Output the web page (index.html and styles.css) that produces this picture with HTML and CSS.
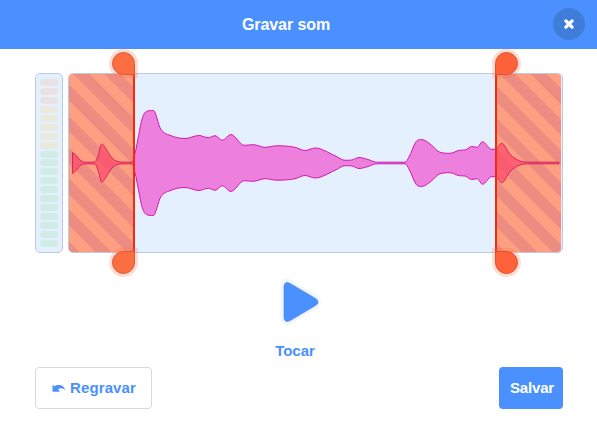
FILE: index.html
```html
<!DOCTYPE html>
<html lang="pt">
<head>
<meta charset="utf-8">
<title>Gravar som</title>
<link rel="stylesheet" href="styles.css">
</head>
<body>
<header class="header">
  <h1 class="title">Gravar som</h1>
  <button class="close" aria-label="Fechar">
    <svg width="12" height="12" viewBox="0 0 12 12"><path d="M2.9 2.9 9.1 9.1M9.1 2.9 2.9 9.1"/></svg>
  </button>
</header>
<main class="body">
  <div class="visualization">
    <div class="meter">
      <i class="red"></i><i class="red"></i><i class="red"></i>
      <i class="yellow"></i><i class="yellow"></i><i class="yellow"></i><i class="yellow"></i><i class="yellow"></i>
      <i></i><i></i><i></i><i></i><i></i><i></i><i></i><i></i><i></i><i></i><i></i>
    </div>
    <div class="waveform">
      <div class="trim trim-start"></div>
      <div class="trim trim-end"></div>
      <svg class="wave" width="493" height="178" viewBox="69 74 493 178">
        <defs>
          <clipPath id="kept"><rect x="134" y="74" width="362" height="178"/></clipPath>
          <clipPath id="cut"><path d="M69 74H134V252H69ZM496 74H562V252H496Z"/></clipPath>
        </defs>
        <path class="wave-kept" clip-path="url(#kept)"/>
        <path class="wave-cut" clip-path="url(#cut)"/>
      </svg>
      <div class="line line-start"><b class="handle top"></b><b class="handle bottom"></b></div>
      <div class="line line-end"><b class="handle top"></b><b class="handle bottom"></b></div>
    </div>
  </div>
  <button class="play">
    <svg width="46" height="50" viewBox="0 0 46 50">
      <path class="play-halo" d="M9 9.5V40.5Q9 46.5 14.5 43.8L40 29Q45 25 40 21L14.5 6.2Q9 3.5 9 9.5Z"/>
      <path class="play-icon" d="M9 9.5V40.5Q9.6 46.2 14.7 43.8L40.5 28.6Q45.6 25 40.5 21.4L14.7 6.2Q9.6 3.8 9 9.5Z"/>
    </svg>
    <span>Tocar</span>
  </button>
  <div class="actions">
    <button class="rerecord">
      <svg width="14" height="10" viewBox="0 0 14 10"><path d="M.5 1.7 2.3 3.2C6 .9 11.8 1.2 13.5 7.7 11.5 5.1 8.5 4.6 6.1 6.2L7.5 8Q7.8 8.8 7 8.800H1.2Q.5 8.8.5 8Z"/></svg>
      <span>Regravar</span>
    </button>
    <button class="save">Salvar</button>
  </div>
</main>
<script src="wave.js"></script>
</body>
</html>
```
FILE: styles.css
```css
* { box-sizing: border-box; }
body {
  margin: 0;
  height: 432px;
  overflow: hidden;
  background: #fff;
  font-family: "Liberation Sans", Arial, sans-serif;
  font-weight: bold;
}
button {
  font: inherit;
  border: 0;
  padding: 0;
  background: none;
}
.header {
  display: flex;
  align-items: center;
  height: 49px;
  padding: 0 12px 0 19px;
  background: #4a90ff;
  color: #fff;
}
.title {
  flex: 1;
  margin: 0;
  text-align: center;
  font-size: 16px;
  line-height: 20px;
  letter-spacing: -.08px;
}
.close {
  display: flex;
  align-items: center;
  justify-content: center;
  width: 32px;
  height: 32px;
  margin-bottom: 1px;
  border-radius: 50%;
  background: #407cda;
}
.close path {
  stroke: #fff;
  stroke-width: 3.3;
  stroke-linecap: round;
}
.body { padding: 24px 34px 0 35px; }
.visualization {
  display: flex;
  gap: 5px;
  height: 180px;
}
.meter {
  display: flex;
  flex-direction: column;
  gap: 1.94px;
  width: 28px;
  padding: 5px 4px;
  border: 1px solid #bccae0;
  border-radius: 5px;
  background: #e5f0ff;
}
.meter i {
  flex: 0 0 7px;
  border-radius: 3px;
  background: #d1ebe7;
}
.meter .red { background: #e9e2e3; }
.meter .yellow { background: #e9eadd; }
.waveform {
  position: relative;
  display: flex;
  justify-content: space-between;
  width: 495px;
  border: 1px solid #bccae0;
  border-radius: 5px;
  background: #e5f0ff;
}
.trim {
  height: 178px;
  background: repeating-linear-gradient(45deg, #ed8c80 0 7.6px, #fd9f80 7.6px 18.6px, #ed8c80 18.6px 22.1px);
}
.trim-start {
  width: 65px;
  border-radius: 4px 0 0 4px;
}
.trim-end {
  width: 66px;
  margin-right: 1px;
  border-radius: 0 4px 4px 0;
}
.wave {
  position: absolute;
  left: 0;
  top: 0;
}
.wave-kept {
  fill: #ed80dd;
  stroke: #cf18b5;
}
.wave-cut {
  fill: rgba(255, 66, 104, .65);
  stroke: #da2360;
}
.line {
  position: absolute;
  top: 0;
  width: 2px;
  height: 178px;
  background: #f42a08;
}
.line-start { left: 64px; }
.line-end { left: 426px; }
.handle {
  position: absolute;
  width: 23px;
  height: 23px;
  border: 1px solid #d95b35;
  background: #fb6e41;
  box-shadow: 0 0 0 3px rgba(255, 100, 65, .22);
}
.line-start .handle { right: 0; }
.line-end .handle { left: 0; background: #ff613b; border-color: #e0512f; }
.top { top: -22px; }
.bottom { bottom: -22px; }
.line-start .top { border-radius: 50% 50% 0 50%; }
.line-start .bottom { border-radius: 50% 0 50% 50%; }
.line-end .top { border-radius: 50% 50% 50% 0; }
.line-end .bottom { border-radius: 0 50% 50% 50%; }
.play {
  display: flex;
  flex-direction: column;
  align-items: center;
  width: 60px;
  margin: 24px 0 0 230px;
  color: #4a90ff;
  font-size: 15px;
  line-height: 18px;
}
.play svg { margin-left: 5px; }
.play span { margin-top: 15px; }
.play-icon { fill: #4a90ff; stroke: #3f7ddd; stroke-width: .6; }
.play-halo { fill: none; stroke: #f1f6ff; stroke-width: 7; stroke-linejoin: round; }
.actions {
  display: flex;
  justify-content: space-between;
  margin-top: 7px;
  font-size: 15px;
}
.rerecord {
  display: flex;
  align-items: center;
  justify-content: center;
  gap: 4px;
  width: 117px;
  height: 42px;
  padding: 0 0 1px 1px;
  border: 1px solid #d9d9d9;
  border-radius: 4px;
  color: #4a90ff;
  letter-spacing: .1px;
}
.rerecord path { fill: #4a90ff; }
.save {
  width: 64px;
  height: 42px;
  padding: 0 0 1px 2px;
  border-radius: 4px;
  background: #4a90ff;
  color: #fff;
  letter-spacing: -.15px;
}
```
FILE: wave.js
```js
// Upper outline of the recording; the lower one mirrors it around MID.
const MID = 163;
const points = [
  [72.5, 152.7], [76, 155.5], [81, 161], [86.7, 162.2], [95, 162], [98, 156], [101.7, 144], [106, 149],
  [112, 158], [120, 162], [132, 162.2], [135, 153.3], [142.3, 118.3], [146.7, 111.3], [153.3, 110.5],
  [160.7, 129], [170, 135.3], [185, 138.5], [199, 135.5], [208.3, 137.7], [215, 135.7],
  [222.3, 140.3], [230.7, 134.5], [244.3, 145.3], [253.3, 144.7], [265, 147.3], [276.7, 145.8],
  [295, 147.3], [305, 150.5], [315, 148], [335, 155.7], [345, 160.3], [351.7, 160],
  [359, 157.5], [368, 159.5], [376.7, 162.2], [405, 162.2], [409, 157], [416, 141.8], [420.7, 139.5], [425, 140.5],
  [431.7, 145.3], [440, 152.3], [450, 153.3], [459.3, 150.3], [465, 150], [471.7, 146.5],
  [477.3, 147.3], [482.3, 141.7], [491.7, 149.3], [495.5, 149.3], [501.7, 143.3], [510, 154.3],
  [520, 161], [530, 162.2], [559, 162.2]
];

// Monotone cubic tangents keep the peaks from overshooting.
function slopes(p) {
  return p.map((_, i) => {
    if (i === 0 || i === p.length - 1) return 0;
    const a = (p[i][1] - p[i - 1][1]) / (p[i][0] - p[i - 1][0]);
    const b = (p[i + 1][1] - p[i][1]) / (p[i + 1][0] - p[i][0]);
    if (a * b <= 0) return 0;
    return Math.sign(a) * Math.min(Math.abs(a + b) / 2, 3 * Math.abs(a), 3 * Math.abs(b));
  });
}

function curve(p) {
  const m = slopes(p);
  let d = '';
  for (let i = 1; i < p.length; i++) {
    const h = (p[i][0] - p[i - 1][0]) / 3;
    d += `C${p[i - 1][0] + h} ${p[i - 1][1] + m[i - 1] * h} ${p[i][0] - h} ${p[i][1] - m[i] * h} ${p[i][0]} ${p[i][1]}`;
  }
  return d;
}

const lower = points.map(([x, y]) => [x, 2 * MID - y]).reverse();
const d = `M${points[0]}${curve(points)}L${lower[0]}${curve(lower)}Z`;
document.querySelectorAll('.wave path[class]').forEach(el => el.setAttribute('d', d));
```
